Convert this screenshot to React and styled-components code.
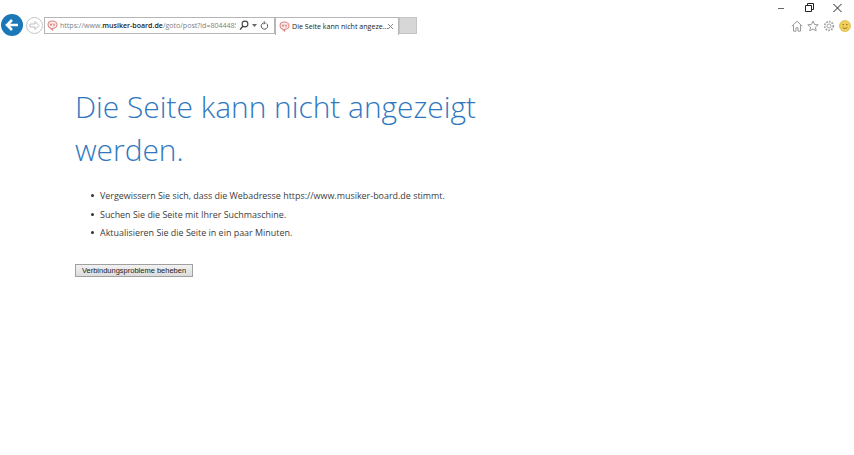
import React from 'react';
import styled, { createGlobalStyle } from 'styled-components';

const Global = createGlobalStyle`
  html, body { margin: 0; padding: 0; background: #fff; }
  #root { width: 854px; height: 455px; overflow: hidden; }
`

const Page = styled.div`
  display: flex;
  flex-direction: column;
  width: 854px;
  height: 455px;
  font-family: "Open Sans", "Noto Sans", sans-serif;
`

const Chrome = styled.div`
  display: flex;
  justify-content: space-between;
  height: 35px;
  padding: 3px 0 0 1px;
  box-sizing: border-box;
`

const NavBar = styled.div`
  display: flex;
  align-items: flex-start;
  padding-top: 11px;
`

const RoundButton = styled.div`
  width: ${p => p.$size}px;
  height: ${p => p.$size}px;
  margin: ${p => p.$margin};
  flex: none;
  svg { display: block; }
`

const AddressBox = styled.div`
  display: flex;
  align-items: center;
  width: 231px;
  height: 17px;
  margin-top: 3px;
  box-sizing: border-box;
  border: 1px solid #b5b5b5;
  padding: 0 5px 0 2px;
  svg { flex: none; }
`

const Url = styled.div`
  flex: 1;
  min-width: 0;
  height: 15px;
  margin-left: 2px;
  font-size: 7.05px;
  line-height: 15px;
  color: #808080;
  white-space: nowrap;
  overflow: hidden;
  b { color: #222; font-weight: 600; }
`

const BarIcon = styled.span`
  display: block;
  flex: none;
  margin-left: ${p => p.$gap}px;
  svg { display: block; }
`

const Tab = styled.div`
  display: flex;
  align-items: center;
  width: 124px;
  height: 18px;
  margin: 3px 0 0 0;
  box-sizing: border-box;
  border: 1px solid #b5b5b5;
  border-bottom: none;
  padding: 0 4px 1px 3px;
  svg { flex: none; }
`

const TabTitle = styled.span`
  flex: 1;
  min-width: 0;
  margin-left: 2px;
  font-size: 7.1px;
  color: #222;
  white-space: nowrap;
`

const NewTab = styled.div`
  width: 18px;
  height: 17px;
  margin-top: 3px;
  box-sizing: border-box;
  background: #d7d7d7;
  border: 1px solid #c4c4c4;
`

const RightSide = styled.div`
  display: flex;
  flex-direction: column;
  align-items: flex-end;
  width: 80px;
`

const WindowControls = styled.div`
  display: flex;
  gap: 19px;
  padding-right: 12px;
  svg { display: block; }
`

const ToolIcons = styled.div`
  display: flex;
  gap: 4px;
  margin-top: 7px;
  padding-right: 3px;
  svg { display: block; }
`

const Content = styled.main`
  padding: 50px 0 0 75px;
`

const Title = styled.h1`
  width: 420px;
  margin: 0;
  font-size: 29.9px;
  line-height: 43px;
  font-weight: 300;
  color: #2f78c0;
`

const Tips = styled.ul`
  list-style: none;
  margin: 18.4px 0 0;
  padding: 0 0 0 16px;
`

const Tip = styled.li`
  position: relative;
  height: 18.5px;
  padding-left: 9px;
  font-size: 8.93px;
  line-height: 14px;
  color: #3c3c3c;
  white-space: nowrap;
  &::before {
    content: '';
    position: absolute;
    left: 0;
    top: 5px;
    width: 3px;
    height: 3px;
    border-radius: 50%;
    background: #333;
  }
`

const FixButton = styled.button`
  display: block;
  width: 118px;
  height: 13px;
  margin-top: 19.6px;
  padding: 0;
  box-sizing: border-box;
  border: 1px solid #a0a0a0;
  background: linear-gradient(#f2f2f2, #dcdcdc);
  font-family: "Liberation Sans", Arial, sans-serif;
  font-size: 7.5px;
  line-height: 11px;
  color: #222;
  white-space: nowrap;
`

const Favicon = () => (
  <svg width="11" height="11" viewBox="0 0 11 11" fill="none">
    <path d="M5.500 1C2.800 1 1 2.600 1 4.800c0 1.500 .9 2.600 2.200 3.200L5.600 10V8.400C8.200 8.400 10 6.900 10 4.700 10 2.600 8.200 1 5.500 1z" stroke="#de8581" strokeWidth="1.100" fill="#fbeeee" />
    <path d="M3 3.600l1 2 1-2M6 3.600l1 1.200 1-1.200M7 4.800v1.600" stroke="#d2625e" strokeWidth=".8" />
  </svg>
)

const Search = () => (
  <svg width="10" height="11" viewBox="0 0 10 11" fill="none" stroke="#444" strokeWidth="1.100">
    <circle cx="6" cy="4" r="2.900" />
    <path d="M3.900 6.200 1 9.600" strokeWidth="1.400" />
  </svg>
)

const Refresh = () => (
  <svg width="9" height="10" viewBox="0 0 9 10" fill="none" stroke="#555" strokeWidth="1">
    <path d="M6.600 2.600a3.200 3.200 0 1 1-2.400-.8" />
    <path d="M3.800 .3l1.600 1.500-1.600 1.400" />
  </svg>
)

export default function App() {
  return (
    <Page>
      <Global />
      <Chrome>
        <NavBar>
          <RoundButton $size={22} $margin="0">
            <svg width="22" height="22" viewBox="0 0 22 22">
              <circle cx="11" cy="11" r="11" fill="#1a78b8" />
              <path d="M17 11H6.500M11 6l-5 5 5 5" fill="none" stroke="#fff" strokeWidth="2.600" />
            </svg>
          </RoundButton>
          <RoundButton $size={17} $margin="2.500px 1px 0 3px">
            <svg width="17" height="17" viewBox="0 0 17 17" fill="none">
              <circle cx="8.500" cy="8.500" r="8" stroke="#c4c4c4" />
              <path d="M4 7h5V4.500l4 4-4 4V10H4z" stroke="#b5b5b5" strokeWidth=".9" />
            </svg>
          </RoundButton>
          <AddressBox>
            <Favicon />
            <Url>https://www.<b>musiker-board.de</b>/goto/post?id=8044485</Url>
            <BarIcon $gap={3}><Search /></BarIcon>
            <BarIcon $gap={3.5}>
              <svg width="5" height="3" viewBox="0 0 5 3"><path d="M0 0h5L2.500 3z" fill="#666" /></svg>
            </BarIcon>
            <BarIcon $gap={3}><Refresh /></BarIcon>
          </AddressBox>
          <Tab>
            <Favicon />
            <TabTitle>Die Seite kann nicht angeze...</TabTitle>
            <svg width="7" height="7" viewBox="0 0 7 7" stroke="#888" strokeWidth="1"><path d="M1 1l5 5M6 1 1 6" /></svg>
          </Tab>
          <NewTab />
        </NavBar>
        <RightSide>
          <WindowControls>
            <svg width="9" height="10" viewBox="0 0 9 10"><path d="M1 5.500h6" stroke="#666" /></svg>
            <svg width="9" height="10" viewBox="0 0 9 10" fill="none" stroke="#222"><path d="M.5 2.500h6v6h-6zM2.500 2.500v-2h6v6h-2" /></svg>
            <svg width="9" height="10" viewBox="0 0 9 10" stroke="#222"><path d="M.5 1l8 8M8.500 1l-8 8" /></svg>
          </WindowControls>
          <ToolIcons>
            <svg width="12" height="12" viewBox="0 0 12 12" fill="none" stroke="#9b9b9b"><path d="M.8 6.200 6 1.200l5.200 5M2.500 5.200v6h2.500v-3.400h2v3.400h2.500v-6" /></svg>
            <svg width="12" height="12" viewBox="0 0 12 12" fill="none" stroke="#9b9b9b"><path d="M6 1l1.500 3.400 3.700.4-2.800 2.400.8 3.600L6 9 2.800 10.800l.8-3.600L.8 4.800l3.700-.4z" /></svg>
            <svg width="12" height="12" viewBox="0 0 12 12" fill="none" stroke="#a5a5a5"><circle cx="6" cy="6" r="2" /><circle cx="6" cy="6" r="4.300" strokeWidth="1.800" strokeDasharray="1.700 1.100" /></svg>
            <svg width="12" height="12" viewBox="0 0 12 12">
              <circle cx="6" cy="6" r="5.500" fill="#f2cf5b" stroke="#d2a72e" strokeWidth=".6" />
              <circle cx="4.200" cy="4.600" r=".7" fill="#6b5410" />
              <circle cx="7.800" cy="4.600" r=".7" fill="#6b5410" />
              <path d="M3.500 7.300c1 1.500 4 1.500 5 0" fill="none" stroke="#6b5410" strokeWidth=".7" />
            </svg>
          </ToolIcons>
        </RightSide>
      </Chrome>
      <Content>
        <Title>Die Seite kann nicht angezeigt werden.</Title>
        <Tips>
          <Tip>Vergewissern Sie sich, dass die Webadresse https://www.musiker-board.de stimmt.</Tip>
          <Tip>Suchen Sie die Seite mit Ihrer Suchmaschine.</Tip>
          <Tip>Aktualisieren Sie die Seite in ein paar Minuten.</Tip>
        </Tips>
        <FixButton>Verbindungsprobleme beheben</FixButton>
      </Content>
    </Page>
  );
}
